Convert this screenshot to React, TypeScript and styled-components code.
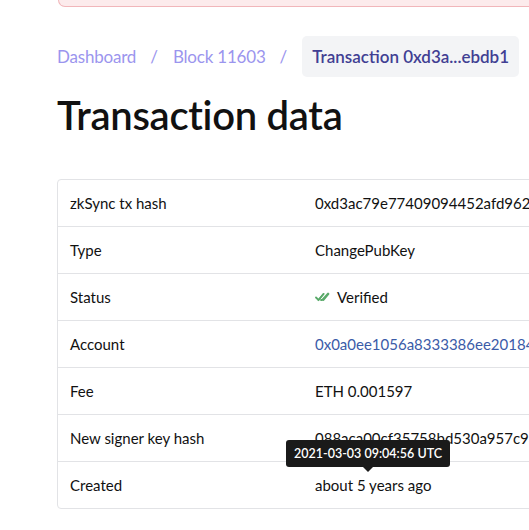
import React from 'react';
import styled, { createGlobalStyle } from 'styled-components';

const GlobalStyle = createGlobalStyle`
  html, body {
    margin: 0;
    padding: 0;
    background: #fff;
    overflow: hidden;
  }
  body {
    font-family: Lato, "Open Sans", sans-serif;
    color: #111;
  }
`;

const Page = styled.div`
  width: 529px;
  height: 530px;
  overflow: hidden;
`;

const Content = styled.div`
  padding-left: 57px;
  width: 720px;
`;

const Alert = styled.div`
  height: 6px;
  margin-left: 1px;
  background: #fcebec;
  border: 1px solid #f1b6ba;
  border-top: none;
  border-radius: 0 0 0 12px;
`;

const Breadcrumbs = styled.nav`
  display: flex;
  align-items: center;
  margin-top: 29px;
  font-size: 17px;
`;

const Crumb = styled.a`
  color: #9b95ee;
  text-decoration: none;
  letter-spacing: -0.2px;
`;

const Slash = styled.span`
  color: #9b95ee;
  margin: 0 15px 0 14px;
`;

const Current = styled.span`
  background: #f3f4f6;
  color: #413f93;
  font-weight: 600;
  padding: 10px 10px;
  border-radius: 5px;
`;

const Title = styled.h1`
  margin: 14px 0 40px;
  font-size: 40px;
  font-weight: 600;
  line-height: 48px;
  letter-spacing: -0.3px;
`;

const Table = styled.div`
  border: 1px solid #e2e3e6;
  border-radius: 4px;
  font-size: 15px;
`;

const Row = styled.div`
  display: grid;
  grid-template-columns: 245px 1fr;
  align-items: center;
  height: 46px;
  padding-left: 12px;
  border-top: 1px solid #e2e3e6;
  &:first-child {
    border-top: none;
  }
`;

const Value = styled.div<{ $link?: boolean }>`
  color: ${(p) => (p.$link ? '#3b5ba8' : '#111')};
  display: flex;
  align-items: center;
  gap: 6px;
  white-space: nowrap;
`;

const TimeWrap = styled.span`
  position: relative;
`;

const Tooltip = styled.span`
  position: absolute;
  left: -29px;
  bottom: 27px;
  background: #1a1a1a;
  color: #fff;
  font-size: 12.5px;
  font-weight: 600;
  line-height: 17px;
  padding: 5px 8px;
  border-radius: 3px;
  white-space: nowrap;
  &::after {
    content: '';
    position: absolute;
    left: 50%;
    bottom: -5px;
    margin-left: -5px;
    border-left: 5px solid transparent;
    border-right: 5px solid transparent;
    border-top: 5px solid #1a1a1a;
  }
`;

const DoubleCheck = () => (
  <svg width="16" height="10" viewBox="0 0 16 10" fill="none" stroke="#5aaa6a" strokeWidth="1.8" strokeLinecap="round">
    <path d="M1 5.5l2.5 2.5 5-6" />
    <path d="M6 8l1 0 6-6.5" />
    <path d="M3.5 8l5-6" />
    <path d="M8.5 8l5-6" />
  </svg>
);

const rows: { label: string; value: React.ReactNode; link?: boolean }[] = [
  { label: 'zkSync tx hash', value: '0xd3ac79e77409094452afd96274a3e1f0b8c5d9e1e2c4d8aa4b8ebdb1' },
  { label: 'Type', value: 'ChangePubKey' },
  {
    label: 'Status',
    value: (
      <>
        <DoubleCheck />
        Verified
      </>
    ),
  },
  { label: 'Account', value: '0x0a0ee1056a8333386ee2018410a7dbe0c2a5f4c1', link: true },
  { label: 'Fee', value: 'ETH 0.001597' },
  { label: 'New signer key hash', value: '088aca00cf35758bd530a957c938e3d1f0aa77b1' },
  {
    label: 'Created',
    value: (
      <TimeWrap>
        <Tooltip>2021-03-03 09:04:56 UTC</Tooltip>
        about 5 years ago
      </TimeWrap>
    ),
  },
];

export default function App() {
  return (
    <Page>
      <GlobalStyle />
      <Content>
        <Alert />
        <Breadcrumbs>
          <Crumb href="#">Dashboard</Crumb>
          <Slash>/</Slash>
          <Crumb href="#">Block 11603</Crumb>
          <Slash>/</Slash>
          <Current>Transaction 0xd3a...ebdb1</Current>
        </Breadcrumbs>
        <Title>Transaction data</Title>
        <Table>
          {rows.map((r) => (
            <Row key={r.label}>
              <div>{r.label}</div>
              <Value $link={r.link}>{r.value}</Value>
            </Row>
          ))}
        </Table>
      </Content>
    </Page>
  );
}
